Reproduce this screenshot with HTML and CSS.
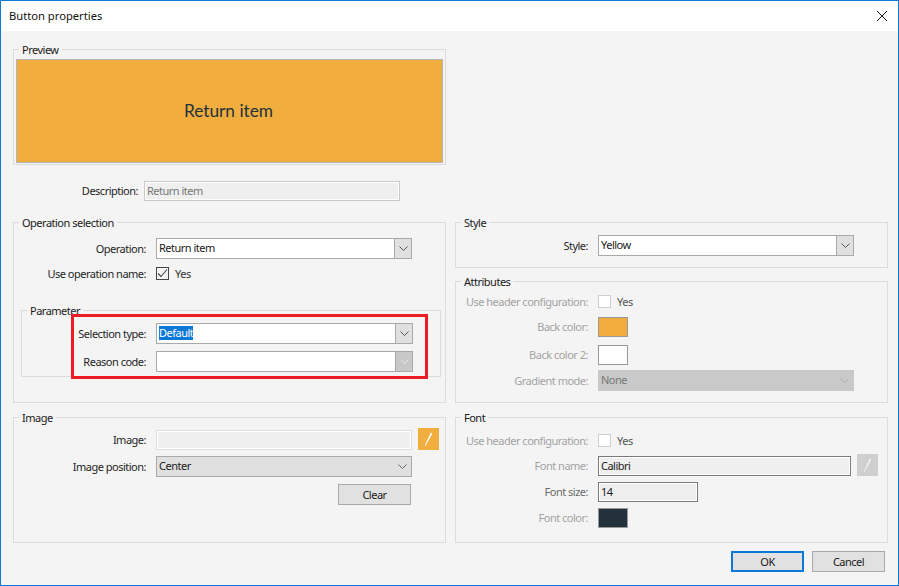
FILE: index.html
```html
<!DOCTYPE html>
<html lang="en">
<head>
<meta charset="utf-8">
<title>Button properties</title>
<link rel="stylesheet" href="styles.css">
</head>
<body>
<div class="window">
  <header class="titlebar">
    <span class="title">Button properties</span>
    <svg class="close" width="12" height="12" viewBox="0 0 12 12"><path d="M1 1l10 10M11 1L1 11" stroke="#111" stroke-width="1" fill="none"/></svg>
  </header>
  <main class="main">
    <section class="group preview-group">
      <span class="legend">Preview</span>
      <div class="preview-btn">Return item</div>
    </section>
    <div class="row desc-row">
      <label class="label desc-label">Description:</label>
      <div class="input desc-input">Return item</div>
    </div>
    <div class="columns">
      <div class="col">
        <section class="group op-group">
          <span class="legend">Operation selection</span>
          <div class="row">
            <label class="label">Operation:</label>
            <div class="combo w256"><span class="combo-text">Return item</span><span class="arrow"><svg width="9" height="5" viewBox="0 0 9 5"><path d="M0.5 0.5l4 4 4-4" stroke="#555" fill="none"/></svg></span></div>
          </div>
          <div class="row mt8">
            <label class="label">Use operation name:</label>
            <span class="check"><svg width="11" height="11" viewBox="0 0 11 11"><path d="M1 5.5l3 3 6-7" stroke="#444" stroke-width="1.1" fill="none"/></svg></span>
            <span class="yes">Yes</span>
          </div>
          <section class="group param-group">
            <span class="legend">Parameter</span>
            <div class="row">
              <label class="label inner">Selection type:</label>
              <div class="combo w257"><span class="combo-text"><span class="selected">Default</span></span><span class="arrow"><svg width="9" height="5" viewBox="0 0 9 5"><path d="M0.5 0.5l4 4 4-4" stroke="#555" fill="none"/></svg></span></div>
            </div>
            <div class="row mt7">
              <label class="label inner">Reason code:</label>
              <div class="combo w257"><span class="combo-text"></span><span class="arrow arrow-off"><svg width="9" height="5" viewBox="0 0 9 5"><path d="M0.5 0.5l4 4 4-4" stroke="#e8e8e8" fill="none"/></svg></span></div>
            </div>
          </section>
          <div class="highlight"></div>
        </section>
        <section class="group image-group">
          <span class="legend">Image</span>
          <div class="row row-top">
            <label class="label">Image:</label>
            <div class="input w256 input-light"></div>
            <span class="edit edit-on"><svg width="9" height="15" viewBox="0 0 9 15"><path d="M6.8 0.6L8.4 1.6 1.8 13.6 0.6 14z" fill="#fff"/></svg></span>
          </div>
          <div class="row mt6">
            <label class="label">Image position:</label>
            <div class="combo w256 combo-flat"><span class="combo-text">Center</span><span class="arrow arrow-flat"><svg width="9" height="5" viewBox="0 0 9 5"><path d="M0.5 0.5l4 4 4-4" stroke="#666" fill="none"/></svg></span></div>
          </div>
          <button class="btn clear-btn" type="button">Clear</button>
        </section>
      </div>
      <div class="col">
        <section class="group style-group">
          <span class="legend">Style</span>
          <div class="row">
            <label class="label">Style:</label>
            <div class="combo w256"><span class="combo-text">Yellow</span><span class="arrow"><svg width="9" height="5" viewBox="0 0 9 5"><path d="M0.5 0.5l4 4 4-4" stroke="#555" fill="none"/></svg></span></div>
          </div>
        </section>
        <section class="group attr-group">
          <span class="legend">Attributes</span>
          <div class="row">
            <label class="label off">Use header configuration:</label>
            <span class="check check-off"></span>
            <span class="yes dim">Yes</span>
          </div>
          <div class="row mt9">
            <label class="label off">Back color:</label>
            <span class="swatch orange"></span>
          </div>
          <div class="row mt8">
            <label class="label off">Back color 2:</label>
            <span class="swatch white"></span>
          </div>
          <div class="row mt5">
            <label class="label off">Gradient mode:</label>
            <div class="combo w256 combo-off"><span class="combo-text">None</span><span class="arrow arrow-flat"><svg width="9" height="5" viewBox="0 0 9 5"><path d="M0.5 0.5l4 4 4-4" stroke="#aaa" fill="none"/></svg></span></div>
          </div>
        </section>
        <section class="group font-group">
          <span class="legend">Font</span>
          <div class="row">
            <label class="label off">Use header configuration:</label>
            <span class="check check-off"></span>
            <span class="yes dim">Yes</span>
          </div>
          <div class="row row-top mt9">
            <label class="label off">Font name:</label>
            <div class="input w253 input-dark">Calibri</div>
            <span class="edit edit-off"><svg width="9" height="15" viewBox="0 0 9 15"><path d="M6.8 0.6L8.4 1.6 1.8 13.6 0.6 14z" fill="#f2f2f2"/></svg></span>
          </div>
          <div class="row mt6">
            <label class="label mid">Font size:</label>
            <div class="input w100 input-dark">14</div>
          </div>
          <div class="row mt6">
            <label class="label off">Font color:</label>
            <span class="swatch dark"></span>
          </div>
        </section>
      </div>
    </div>
    <footer class="footer">
      <button class="btn btn-ok" type="button">OK</button>
      <button class="btn" type="button">Cancel</button>
    </footer>
  </main>
</div>
</body>
</html>
```
FILE: styles.css
```css
* { box-sizing: border-box; }
html, body { margin: 0; padding: 0; }
body { width: 899px; height: 586px; overflow: hidden; font-family: "Noto Sans", "Open Sans", sans-serif; font-size: 11px; letter-spacing: -0.5px; color: #1a1a1a; }
.window { width: 899px; height: 586px; border: 1px solid #0a7bd6; background: #f4f4f4; display: flex; flex-direction: column; }
.titlebar { height: 30px; background: #fff; display: flex; align-items: center; justify-content: space-between; padding: 0 10px 1px 8px; flex: none; }
.title { font-size: 11.2px; letter-spacing: 0; color: #111; }
.main { padding: 18px 0 0 12px; flex: 1; }

.group { position: relative; border: 1px solid #dcdcdc; width: 433px; }
.legend { position: absolute; top: -7px; left: 5px; padding: 0 3px; line-height: 14px; background: #f4f4f4; color: #1a1a1a; white-space: nowrap; }

.preview-group { height: 116px; padding: 9px 2px 0; }
.preview-btn { height: 104px; background: #f2ad3f; border: 1px solid #b3b3b3; display: flex; align-items: center; justify-content: center; font-family: Lato, "Noto Sans", sans-serif; font-size: 17.3px; letter-spacing: 0; color: #22313c; padding: 0 2px 2px 0; }

.row { display: flex; align-items: center; }
.row-top { align-items: flex-start; }
.row-top .label { margin-top: 4px; }
.mt5 { margin-top: 5px; }
.mt6 { margin-top: 6px; }
.mt7 { margin-top: 7px; }
.mt8 { margin-top: 8px; }
.mt9 { margin-top: 9px; }

.label { width: 132px; margin-right: 10px; text-align: right; line-height: 12px; white-space: nowrap; flex: none; color: #1f1f1f; }
.label.inner { width: 124px; }
.label.off { color: #a3a3a3; }
.label.mid { color: #6a6a6a; }

.desc-row { margin-top: 16px; }
.desc-label { width: 125px; margin-right: 6px; }
.input { height: 20px; border: 1px solid #c9c9c9; box-shadow: inset 0 0 0 1px #fff; background: #efefef; line-height: 18px; padding-left: 2px; flex: none; }
.desc-input { width: 256px; color: #777; }
.input-light { border-color: #dedede; }
.input-dark { border-color: #7a7a7a; }
.w253 { width: 253px; }
.w256 { width: 256px; }
.w257 { width: 257px; }
.w100 { width: 100px; }

.columns { display: flex; gap: 9px; margin-top: 21px; }
.col { display: flex; flex-direction: column; }

.combo { height: 21px; border: 1px solid #a9a9a9; background: #fff; display: flex; flex: none; }
.combo-text { flex: 1; line-height: 18px; padding-left: 2px; color: #1a1a1a; }
.arrow { width: 17px; background: #e0e0e0; border-left: 1px solid #a9a9a9; display: flex; align-items: center; justify-content: center; }
.arrow-off { background: #c8c8c8; }
.arrow-flat { background: transparent; border-left: 0; }
.combo-flat { background: #e0e0e0; }
.combo-off { background: #c9c9c9; border-color: #c9c9c9; }
.combo-off .combo-text { color: #777; }
.selected { display: inline-block; background: #0a78d7; color: #fff; height: 14px; line-height: 14px; }

.check { width: 13px; height: 13px; border: 1px solid #444; background: #f4f4f4; display: flex; align-items: center; justify-content: center; flex: none; }
.check-off { border-color: #cfcfcf; background: #fff; }
.yes { margin-left: 6px; line-height: 12px; color: #333; }
.yes.dim { color: #555; }

.op-group { height: 181px; padding-top: 15px; }
.param-group { width: 420px; height: 67px; margin: 30px 0 0 7px; padding-top: 12px; }
.highlight { position: absolute; left: 57px; top: 91px; width: 357px; height: 65px; border: 3px solid #ed1c24; }

.image-group { height: 126px; margin-top: 14px; padding-top: 12px; }
.edit { width: 21px; height: 22px; margin: -2px 0 0 6px; display: flex; align-items: center; justify-content: center; flex: none; }
.edit-on { background: #f2ad3f; }
.edit-off { background: #cfcfcf; }

.btn { width: 73px; height: 21px; padding: 0; border: 1px solid #a9a9a9; background: #e1e1e1; font: inherit; letter-spacing: inherit; color: #1a1a1a; line-height: 17px; }
.clear-btn { display: block; margin: 7px 0 0 324px; }

.style-group { height: 46px; padding-top: 12px; }
.attr-group { height: 122px; margin-top: 13px; padding-top: 13px; }
.font-group { height: 126px; margin-top: 14px; padding-top: 16px; }

.swatch { width: 30px; height: 20px; border: 1px solid #999; flex: none; }
.orange { background: #f2ad3f; }
.white { background: #fff; }
.dark { background: #22313a; }

.footer { display: flex; justify-content: flex-end; gap: 8px; margin-top: 8px; padding-right: 13px; }
.btn-ok { border: 2px solid #0a78d7; }
```
